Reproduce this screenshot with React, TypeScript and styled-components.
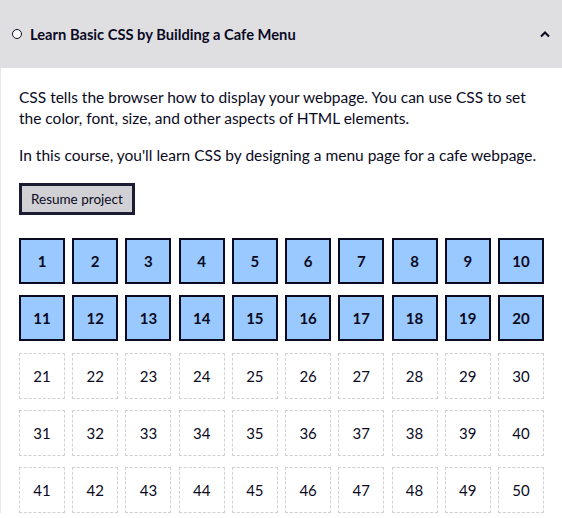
import React from "react";
import styled, { createGlobalStyle } from "styled-components";

const GlobalStyle = createGlobalStyle`
  html, body { margin: 0; padding: 0; background: #ffffff; }
  body { font-family: Lato, "Open Sans", sans-serif; color: #0a0a23; }
`;

const Block = styled.div`
  width: 562px;
`;

const Header = styled.button`
  display: flex;
  align-items: center;
  justify-content: space-between;
  width: 100%;
  height: 68px;
  padding: 0 11px 0 12px;
  border: none;
  background: #dfdfe2;
  color: #0a0a23;
  font-family: Lato, sans-serif;
  cursor: pointer;
`;

const TitleGroup = styled.span`
  display: flex;
  align-items: center;
  gap: 8px;
`;

const Circle = styled.span`
  width: 10px;
  height: 10px;
  box-sizing: border-box;
  border: 1px solid #0a0a23;
  border-radius: 50%;
  background: #fff;
`;

const Title = styled.span`
  font-size: 14.7px;
  font-weight: 700;
`;

const Body = styled.div`
  border-left: 1px solid #e8e8ec;
  padding: 19px 17px 0 18px;
`;

const Para = styled.p`
  margin: 0 0 16px;
  font-size: 15.5px;
  line-height: 21px;
`;

const ResumeButton = styled.button`
  display: block;
  margin: 17px 0 23px;
  height: 32px;
  padding: 0 9px;
  background: #d0d0d5;
  border: 3px solid #1b1b32;
  color: #0a0a23;
  font-family: Lato, sans-serif;
  font-size: 13.5px;
`;

const Grid = styled.div`
  display: grid;
  grid-template-columns: repeat(10, 46px);
  justify-content: space-between;
  row-gap: 11.3px;
  width: 525px;
`;

const Step = styled.div<{ $done: boolean }>`
  box-sizing: border-box;
  width: 46px;
  height: 46px;
  display: flex;
  align-items: center;
  justify-content: center;
  font-size: 15px;
  font-weight: ${(p) => (p.$done ? 700 : 400)};
  background: ${(p) => (p.$done ? "#99c9ff" : "#ffffff")};
  border: ${(p) => (p.$done ? "2px solid #0a0a23" : "1px dashed #d0d0d5")};
  color: #0a0a23;
`;

const Chevron = () => (
  <svg width="12" height="12" viewBox="0 0 12 12" aria-hidden="true">
    <path d="M2 8.5 L6 4.5 L10 8.5" fill="none" stroke="#0a0a23" strokeWidth="2" />
  </svg>
);

export default function App() {
  const steps = Array.from({ length: 50 }, (_, i) => i + 1);
  return (
    <>
      <GlobalStyle />
      <Block>
        <Header>
          <TitleGroup>
            <Circle />
            <Title>Learn Basic CSS by Building a Cafe Menu</Title>
          </TitleGroup>
          <Chevron />
        </Header>
        <Body>
          <Para>
            CSS tells the browser how to display your webpage. You can use CSS to set the color,
            font, size, and other aspects of HTML elements.
          </Para>
          <Para>In this course, you'll learn CSS by designing a menu page for a cafe webpage.</Para>
          <ResumeButton>Resume project</ResumeButton>
          <Grid>
            {steps.map((n) => (
              <Step key={n} $done={n <= 20}>
                {n}
              </Step>
            ))}
          </Grid>
        </Body>
      </Block>
    </>
  );
}
